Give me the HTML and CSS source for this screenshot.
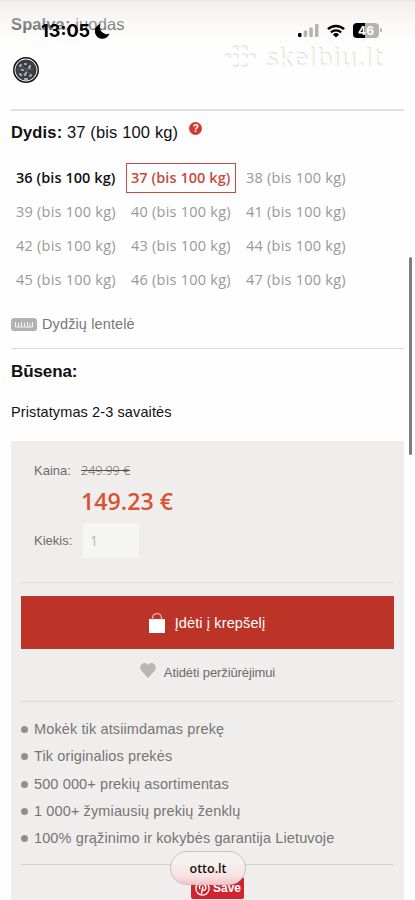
FILE: index.html
```html
<!DOCTYPE html>
<html lang="lt">
<head>
<meta charset="utf-8">
<meta name="viewport" content="width=device-width">
<title>otto.lt</title>
<link rel="stylesheet" href="styles.css">
</head>
<body>
<main class="page">
  <section class="color">
    <div class="color-label"><b>Spalva:</b> juodas</div>
    <svg class="swatch" width="28" height="28" viewBox="0 0 28 28">
      <circle cx="14" cy="14" r="12.2" fill="#fff" stroke="#111" stroke-width="1.5"/>
      <circle cx="14" cy="14" r="10.6" fill="#3c3c43"/>
      <g stroke="#b6b6be" stroke-width="2" stroke-linecap="round"><path d="M8 10l1-1M13 8h1M17 12l1-2M10 14h1M14 17l-1 2M8 18l1 1M18 20l1-1M13 23h2"/></g>
      <path d="M6 14l5-3 4 3 6-1M9 21l5-6 5 3" stroke="#66666f" fill="none"/>
    </svg>
  </section>

  <section class="sizes">
    <div class="size-label"><b>Dydis:</b> 37 (bis 100 kg)<span class="help">?</span></div>
    <div class="size-grid">
      <span class="size available">36 (bis 100 kg)</span><span class="size selected">37 (bis 100 kg)</span><span class="size">38 (bis 100 kg)</span>
      <span class="size">39 (bis 100 kg)</span><span class="size">40 (bis 100 kg)</span><span class="size">41 (bis 100 kg)</span>
      <span class="size">42 (bis 100 kg)</span><span class="size">43 (bis 100 kg)</span><span class="size">44 (bis 100 kg)</span>
      <span class="size">45 (bis 100 kg)</span><span class="size">46 (bis 100 kg)</span><span class="size">47 (bis 100 kg)</span>
    </div>
    <div class="chart">
      <svg width="26" height="13" viewBox="0 0 26 13"><rect width="26" height="13" rx="3" fill="#b2b2b2"/><path d="M4.500 4v5h17V4M7.500 5v4M10.500 4v5M13.500 5v4M16.500 4v5M19 5v4" fill="none" stroke="#f4f4f4"/></svg>
      <span>Dydžių lentelė</span>
    </div>
  </section>

  <section class="status">
    <h2>Būsena:</h2>
    <p>Pristatymas 2-3 savaitės</p>
  </section>

  <section class="buy">
    <div class="price-row"><span class="label">Kaina:</span><s>249.99 €</s></div>
    <div class="price">149.23 €</div>
    <div class="qty-row"><span class="label">Kiekis:</span><span class="qty">1</span></div>
    <div class="cart">
      <svg width="18" height="22" viewBox="0 0 18 22"><path d="M1 7h16v14H1z" fill="#fff"/><path d="M4.500 8V6a4.500 4.500 0 0 1 9 0v2" fill="none" stroke="#f0a79e" stroke-width="1.400"/></svg>
      <span>Įdėti į krepšelį</span>
    </div>
    <div class="wish">
      <svg width="16" height="15" viewBox="0 0 16 15"><path d="M8 15L1.500 8C-2.500 3 4-3 8 2c4-5 10.500 1 6.500 6z" fill="#b9b6b4"/></svg>
      <span>Atidėti peržiūrėjimui</span>
    </div>
    <ul class="benefits">
      <li>Mokėk tik atsiimdamas prekę</li>
      <li>Tik originalios prekės</li>
      <li>500 000+ prekių asortimentas</li>
      <li>1 000+ žymiausių prekių ženklų</li>
      <li>100% grąžinimo ir kokybės garantija Lietuvoje</li>
    </ul>
    <div class="save">
      <svg width="15" height="15" viewBox="0 0 15 15" fill="none" stroke="#fff"><circle cx="7.500" cy="7.500" r="6.600" stroke-width="1.300"/><path d="M5 8.200C3 4.500 6 3.200 8 3.300c4 .3 3.500 6 .8 6-.9 0-1.400-.6-1.400-.8M8 5.500L6.300 13" stroke-width="1.400"/></svg>
      <span>Save</span>
    </div>
  </section>
</main>

<div class="fade"></div>
<div class="clock"><span>13:05</span>
  <svg width="15" height="15" viewBox="0 0 15 15"><path d="M5.500 0A7.500 7.500 0 1 0 14.500 9.500 7 7 0 0 1 5.500 0z"/></svg>
</div>
<div class="indicators">
  <svg width="21" height="13" viewBox="0 0 21 13"><rect y="9" width="3.500" height="4" rx="1"/><g fill="#b5b3b1"><rect x="5.700" y="6.500" width="3.500" height="6.500" rx="1"/><rect x="11.300" y="3.500" width="3.500" height="9.500" rx="1"/><rect x="17" width="3.500" height="13" rx="1"/></g></svg>
  <svg width="18" height="14" viewBox="0 0 18 14"><g fill="none" stroke="#000" stroke-width="2.300"><path d="M.9 5.200a11.800 11.800 0 0 1 16.200 0M3.900 8.400a7.500 7.500 0 0 1 10.200 0"/></g><path d="M9 13.500L5.900 10.500a4.500 4.500 0 0 1 6.200 0z"/></svg>
  <div class="battery">46</div>
</div>
<div class="watermark">
  <svg width="32" height="28" viewBox="0 0 32 28" fill="none" stroke="#e3e3e3" stroke-width="1.500"><path d="M9 4a3 3 0 0 1 5 0v3M18 4a3 3 0 0 1 5 0v3M1 12a3 3 0 0 1 5 0v3M9 12a3 3 0 0 1 5 0v3M18 12a3 3 0 0 1 5 0v3M26 12a3 3 0 0 1 5 0v3M9 22a3 3 0 0 0 5 0v-2M18 22a3 3 0 0 0 5 0v-2"/></svg>
  <span>skelbiu.lt</span>
</div>
<div class="scrollbar"></div>
<div class="address">otto.lt</div>
</body>
</html>
```
FILE: styles.css
```css
* { box-sizing: border-box; }
body { margin: 0; width: 415px; height: 900px; overflow: hidden; position: relative; background: #fefefe; color: #111; font-family: "Liberation Sans", Arial, sans-serif; }
.page { padding: 0 11px; height: 900px; }
svg { display: block; flex: none; }

.color { height: 111px; padding-top: 14px; border-bottom: 2px solid #dfdfdf; }
.color-label { font-size: 16.500px; letter-spacing: .12px; line-height: 20px; color: #333; white-space: nowrap; }
.swatch { margin: 22px 0 0 1px; }

.sizes { height: 238px; border-bottom: 1px solid #d8d8d8; }
.size-label { display: flex; height: 52px; padding-top: 11px; font-size: 16.500px; letter-spacing: .14px; line-height: 21px; white-space: pre; }
.help { width: 13px; height: 13px; margin-left: 11px; border-radius: 50%; background: #d03a2e; color: #fff; font-size: 10px; font-weight: bold; letter-spacing: 0; line-height: 13px; text-align: center; }
.size-grid { display: grid; grid-template-columns: repeat(3, 110px); grid-auto-rows: 30px; gap: 4px 5px; }
.size { border: 1px solid transparent; padding-left: 4px; font: 500 14.500px/28px "Open Sans", sans-serif; letter-spacing: .24px; color: #999; white-space: nowrap; }
.size.available { color: #111; font-weight: 600; letter-spacing: .07px; }
.size.selected { border-color: #c94a40; color: #c94a40; font-weight: 600; letter-spacing: .07px; }
.chart { display: flex; align-items: center; gap: 5px; margin-top: 20px; height: 18px; font-size: 14.500px; letter-spacing: .12px; color: #777; }

.status { height: 92px; padding-top: 13px; }
.status h2 { margin: 0; font-size: 17px; letter-spacing: -.1px; line-height: 20px; }
.status p { margin: 21px 0 0; font-size: 14.500px; letter-spacing: .11px; line-height: 18px; }

.buy { height: 459px; padding: 19px 10px 0; background: #f0eeec; color: #6d6a68; }
.label { width: 47px; font-size: 13px; }
.price-row { display: flex; align-items: center; height: 20px; padding-left: 13px; }
.price-row s { font: 300 12.500px "Open Sans", sans-serif; color: #555; }
.price { padding-left: 60px; font: 600 23.200px/42px "Open Sans", sans-serif; color: #d9532f; }
.qty-row { display: flex; align-items: center; height: 61px; padding: 0 0 24px 13px; border-bottom: 1px solid #dedbd9; }
.qty { width: 56px; height: 35px; margin-left: 2px; padding-left: 7px; background: #f5f5f2; color: #b5b3b1; font: 14px/35px "Open Sans", sans-serif; }
.cart { display: flex; justify-content: center; align-items: center; gap: 9px; height: 53px; margin-top: 13px; padding-right: 2px; background: #bc3328; color: #fff; font-size: 14.500px; letter-spacing: .12px; }
.wish { display: flex; justify-content: center; gap: 8px; height: 53px; padding-top: 14px; border-bottom: 1px solid #dad7d5; font-size: 13px; letter-spacing: -.1px; line-height: 19px; }
.benefits { height: 163px; margin: 0; padding: 14px 0 0; border-bottom: 1px solid #d5d2d0; list-style: none; font-size: 14.500px; letter-spacing: .12px; line-height: 27.250px; color: #777472; }
.benefits li { display: flex; align-items: center; gap: 6px; white-space: nowrap; }
.benefits li::before { content: ""; width: 7px; height: 7px; border-radius: 50%; background: #92908f; }
.save { display: flex; align-items: center; gap: 3px; width: 53px; height: 22px; margin: 12px 0 0 170px; padding-left: 4px; border-radius: 2px; background: #d2242d; color: #fff; font-size: 12px; font-weight: bold; }

.fade { position: absolute; inset: 0 0 auto; height: 50px; background: linear-gradient(rgba(239,236,233,.85), rgba(245,243,240,.45) 45%, rgba(254,254,254,0)); border-top: 1px solid #e9e6e3; }
.clock { position: absolute; left: 41px; top: 22px; display: flex; align-items: center; gap: 5px; color: #000; font: 700 18px/18px Inter, sans-serif; }
.indicators { position: absolute; left: 298px; top: 23px; display: flex; align-items: center; gap: 8px; }
.battery { position: relative; width: 26px; height: 15px; border-radius: 4px; background: linear-gradient(90deg, #000 46%, #b5b3b1 46%); color: #fff; font: 700 12px/15px Inter, sans-serif; text-align: center; }
.battery::after { content: ""; position: absolute; left: 27px; top: 5px; width: 1.500px; height: 4px; border-radius: 1px; background: #b5b3b1; }
.watermark { position: absolute; left: 224px; top: 43px; display: flex; align-items: center; gap: 9px; height: 28px; color: #fdfdfd; font: 600 25px/28px "Open Sans", sans-serif; letter-spacing: .8px; text-shadow: 1px -1px 1px #d9d9d9; }
.scrollbar { position: absolute; left: 408.500px; top: 257px; width: 3px; height: 198px; border-radius: 2px; background: #7d7d7d; }
.address { position: absolute; left: 170px; top: 851px; width: 76px; height: 34px; border: 1px solid #c9c3c1; border-radius: 17px; background: linear-gradient(#f5f1ef 30%, #f9e2e2 75%, #f4c5ca); color: #111; font: 600 12.500px/33px "Open Sans", sans-serif; text-align: center; }
```
